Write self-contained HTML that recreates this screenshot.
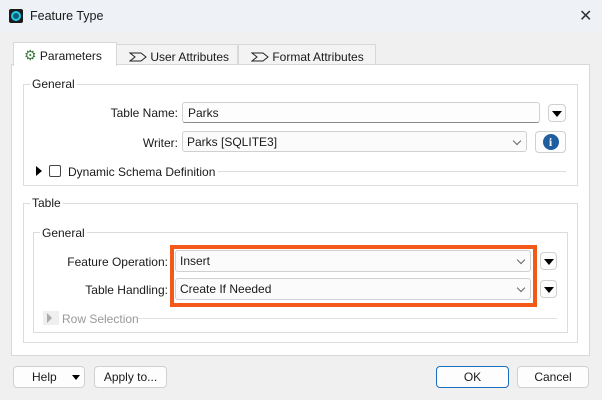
<!DOCTYPE html>
<html><head><style>
body{margin:0;width:602px;height:400px;background:#f0f0f0;font-family:"Liberation Sans",sans-serif;font-size:12px;color:#1a1a1a;position:relative;overflow:hidden;white-space:nowrap}
.a{position:absolute}
.title{left:0;top:0;width:602px;height:32px;background:#eef1f6}
.inp{background:#fdfdfd;border:1px solid #d0d0d0;border-bottom-color:#8a8a8a;border-radius:3px;box-sizing:border-box;padding:3px 5px;line-height:14px}
.combo{background:#fbfbfb;border:1px solid #d0d0d0;border-radius:3px;box-sizing:border-box;padding:3px 4px;line-height:14px}
.chev{position:absolute;right:6px;top:6px;width:5px;height:5px;border-right:1px solid #666;border-bottom:1px solid #666;transform:rotate(45deg)}
.btn{background:#fdfdfd;border:1px solid #d0d0d0;border-radius:4px;box-sizing:border-box;text-align:center}
.tri{width:0;height:0;border-left:5px solid transparent;border-right:5px solid transparent;border-top:6px solid #000}
.grp{border:1px solid #dcdcdc;box-sizing:border-box}
.lbl{background:#fff;padding:0 2px}
.tab{border:1px solid #d8d8d8;border-bottom:none;box-sizing:border-box;padding-top:5px;background:#f3f3f3}
</style></head><body>
<div class="a title"></div>
<div class="a" style="left:9px;top:9px;width:14px;height:14px;background:#1b1b1b;border-radius:2px"></div>
<div class="a" style="left:11px;top:11px;width:6px;height:6px;border:2px solid #23c8ea;border-radius:50%;background:#0b5e74"></div>
<div class="a" style="left:30px;top:9px;font-size:12.5px">Feature Type</div>
<div class="a" style="left:579px;top:6px;font-size:16px;color:#333">✕</div>

<div class="a tab" style="left:116px;top:44px;width:122px;height:21px;padding-left:12px"><svg width="18" height="10" style="vertical-align:-1px"><path d="M1 1H12L17 5L12 9H1L6 5Z" fill="none" stroke="#222" stroke-width="1"/></svg> User Attributes</div>
<div class="a tab" style="left:238px;top:44px;width:138px;height:21px;padding-left:12px"><svg width="18" height="10" style="vertical-align:-1px"><path d="M1 1H12L17 5L12 9H1L6 5Z" fill="none" stroke="#222" stroke-width="1"/></svg> Format Attributes</div>
<div class="a" style="left:11px;top:64px;width:579px;height:292px;background:#fff;border:1px solid #d8d8d8;box-sizing:border-box"></div>
<div class="a tab" style="left:13px;top:42px;width:104px;height:24px;background:#fff;padding-left:10px;padding-top:4px"><span style="color:#3a7a3a;font-size:14px">⚙</span> Parameters</div>

<div class="a grp" style="left:23px;top:84px;width:555px;height:102px"></div>
<div class="a lbl" style="left:30px;top:77px">General</div>
<div class="a" style="left:100px;top:106px;width:78px;text-align:right">Table Name:</div>
<div class="a inp" style="left:182px;top:102px;width:358px;height:21px">Parks</div>
<div class="a btn" style="left:548px;top:104px;width:18px;height:18px"><div class="tri" style="margin:6px auto 0"></div></div>
<div class="a" style="left:116px;top:136px;width:62px;text-align:right">Writer:</div>
<div class="a combo" style="left:182px;top:131px;width:345px;height:21px">Parks [SQLITE3]<div class="chev"></div></div>
<div class="a btn" style="left:535px;top:131px;width:31px;height:22px"><div style="margin:2px auto 0;width:16px;height:16px;border-radius:50%;background:#1f5fa0;color:#fff;font-weight:bold;font-size:12px;line-height:16px;font-family:'Liberation Serif',serif">i</div></div>
<div class="a" style="left:36px;top:166px;width:0;height:0;border-top:5px solid transparent;border-bottom:5px solid transparent;border-left:6px solid #000"></div>
<div class="a" style="left:49px;top:165px;width:12px;height:12px;border:1px solid #444;border-radius:2px;box-sizing:border-box;background:#fff"></div>
<div class="a" style="left:68px;top:165px">Dynamic Schema Definition</div>
<div class="a" style="left:218px;top:171px;width:348px;height:1px;background:#dcdcdc"></div>

<div class="a grp" style="left:23px;top:203px;width:555px;height:140px"></div>
<div class="a lbl" style="left:30px;top:196px">Table</div>
<div class="a grp" style="left:33px;top:232px;width:535px;height:101px"></div>
<div class="a lbl" style="left:40px;top:226px">General</div>
<div class="a" style="left:170px;top:245px;width:367px;height:62px;border:4px solid #f25a1a;box-sizing:border-box;background:#fff"></div>
<div class="a" style="left:50px;top:255px;width:118px;text-align:right">Feature Operation:</div>
<div class="a combo" style="left:175px;top:250px;width:356px;height:22px">Insert<div class="chev"></div></div>
<div class="a" style="left:50px;top:283px;width:118px;text-align:right">Table Handling:</div>
<div class="a combo" style="left:175px;top:278px;width:356px;height:22px">Create If Needed<div class="chev"></div></div>
<div class="a btn" style="left:540px;top:252px;width:17px;height:18px"><div class="tri" style="margin:6px auto 0"></div></div>
<div class="a btn" style="left:540px;top:280px;width:17px;height:18px"><div class="tri" style="margin:6px auto 0"></div></div>
<div class="a" style="left:43px;top:311px;width:16px;height:14px;background:#efefef"></div>
<div class="a" style="left:47px;top:313px;width:0;height:0;border-top:5px solid transparent;border-bottom:5px solid transparent;border-left:5px solid #aaa"></div>
<div class="a" style="left:62px;top:312px;color:#999">Row Selection</div>
<div class="a" style="left:138px;top:318px;width:419px;height:1px;background:#e0e0e0"></div>

<div class="a btn" style="left:13px;top:366px;width:72px;height:22px;line-height:20px;text-align:left;padding-left:18px">Help<div class="tri" style="position:absolute;left:58px;top:8px;border-width:5px 4px 0 4px"></div></div>
<div class="a btn" style="left:94px;top:366px;width:73px;height:22px;line-height:20px">Apply to...</div>
<div class="a btn" style="left:436px;top:366px;width:73px;height:22px;line-height:20px;border-color:#1a6ec0">OK</div>
<div class="a btn" style="left:517px;top:366px;width:72px;height:22px;line-height:20px">Cancel</div>
</body></html>
